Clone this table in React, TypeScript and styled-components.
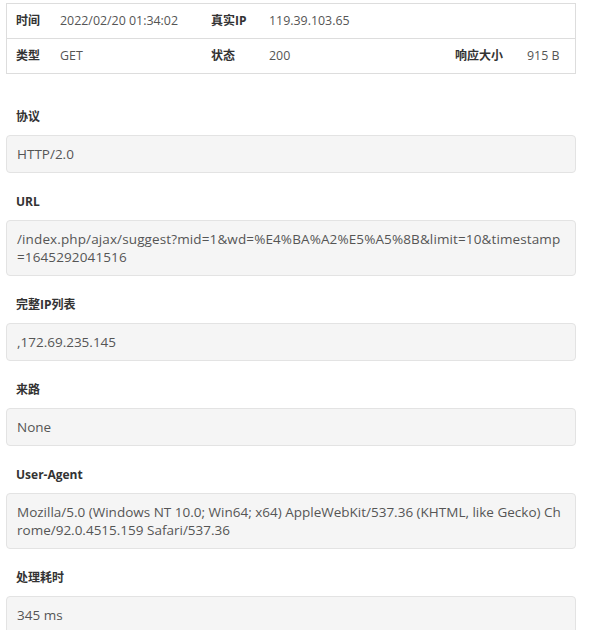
import React from "react";
import styled, { createGlobalStyle } from "styled-components";

const Global = createGlobalStyle`
  html, body { margin: 0; padding: 0; background: #fff; }
  body {
    font-family: "Open Sans", "Noto Sans CJK SC", sans-serif;
    color: #555;
  }
`;

const Page = styled.div`
  padding: 3px 15px 0 6px;
  width: 570px;
`;

const InfoTable = styled.div`
  border: 1px solid #ddd;
  margin-bottom: 34px;
`;

const Row = styled.div`
  display: grid;
  grid-template-columns: 44px 151px 58px 186px 72px 1fr;
  & + & { border-top: 1px solid #ddd; }
`;

const Cell = styled.div<{ $head?: boolean; $span?: number }>`
  padding: 8px 9px;
  line-height: 18px;
  white-space: nowrap;
  font-size: ${(p) => (p.$head ? "12px" : "12.4px")};
  font-weight: ${(p) => (p.$head ? "bold" : "normal")};
  color: ${(p) => (p.$head ? "#333" : "#555")};
  grid-column: span ${(p) => p.$span ?? 1};
`;

const Group = styled.div`
  margin-bottom: 20px;
`;

const Label = styled.div`
  font-size: 12px;
  font-weight: bold;
  color: #333;
  line-height: 18px;
  margin-bottom: 9px;
  padding-left: 10px;
`;

const Well = styled.div<{ $spacing?: number }>`
  background: #f5f5f5;
  border: 1px solid #e3e3e3;
  border-radius: 4px;
  padding: 9px 10px;
  font-size: 13.5px;
  line-height: 18px;
  color: #555;
  letter-spacing: ${(p) => p.$spacing ?? 0}px;
  word-break: break-all;
`;

const fields: { label: string; value: string; spacing?: number }[] = [
  { label: "协议", value: "HTTP/2.0" },
  {
    label: "URL",
    value: "/index.php/ajax/suggest?mid=1&wd=%E4%BA%A2%E5%A5%8B&limit=10&timestamp=1645292041516",
    spacing: 0.12,
  },
  { label: "完整IP列表", value: ",172.69.235.145" },
  { label: "来路", value: "None" },
  {
    label: "User-Agent",
    value:
      "Mozilla/5.0 (Windows NT 10.0; Win64; x64) AppleWebKit/537.36 (KHTML, like Gecko) Chrome/92.0.4515.159 Safari/537.36",
  },
  { label: "处理耗时", value: "345 ms" },
];

export default function App() {
  return (
    <>
      <Global />
      <Page>
        <InfoTable>
          <Row>
            <Cell $head>时间</Cell>
            <Cell>2022/02/20 01:34:02</Cell>
            <Cell $head>真实IP</Cell>
            <Cell $span={3}>119.39.103.65</Cell>
          </Row>
          <Row>
            <Cell $head>类型</Cell>
            <Cell>GET</Cell>
            <Cell $head>状态</Cell>
            <Cell>200</Cell>
            <Cell $head>响应大小</Cell>
            <Cell>915 B</Cell>
          </Row>
        </InfoTable>
        {fields.map((f) => (
          <Group key={f.label}>
            <Label>{f.label}</Label>
            <Well $spacing={f.spacing}>{f.value}</Well>
          </Group>
        ))}
      </Page>
    </>
  );
}
